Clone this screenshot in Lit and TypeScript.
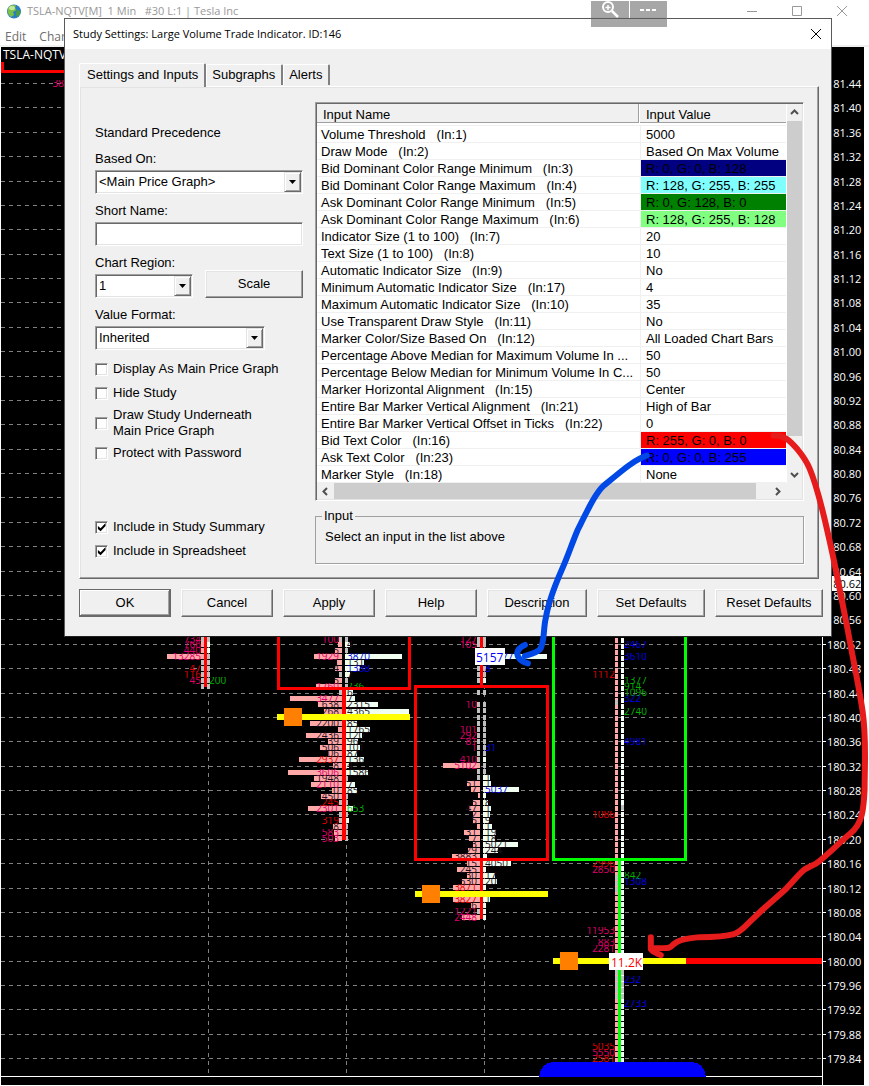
import { LitElement, html, svg, css } from "lit";
import { customElement } from "lit/decorators.js";
import { classMap } from "lit/directives/class-map.js";

/* ---------- footprint chart ---------- */

// One price level: [y, left text, left colour, left bar start, right text, right colour, right bar end]
type Level = [number, string, string, number, string, string, number];

const M = "#e0006c";
const R = "#e60000";
const K = "#20101c";
const B = "#0000e6";
const G = "#00b400";

const COLUMN_ONE: Level[] = [
  [639, "734", M, 0, "", K, 0],
  [644, "766", M, 201, "", K, 210],
  [650, "440", M, 201, "", K, 210],
  [656, "13285", M, 167, "", K, 0],
  [662, "", M, 0, "", K, 0],
  [668, "47", R, 0, "", K, 0],
  [674, "116", R, 0, "", K, 0],
  [680, "45", M, 0, "200", G, 0],
  [686, "", M, 0, "", K, 0],
];

const COLUMN_TWO: Level[] = [
  [639, "100", M, 0, "", K, 0],
  [644, "", M, 338, "4", K, 350],
  [650, "5", K, 335, "", K, 0],
  [656, "1929", M, 314, "3870", B, 402],
  [662, "1", K, 337, "131", K, 364],
  [668, "4", K, 335, "1388", B, 360],
  [674, "", K, 0, "7", K, 350],
  [680, "5", K, 335, "", K, 0],
  [686, "1760", M, 316, "236", G, 0],
  [692, "", K, 0, "6", K, 353],
  [698, "3477", M, 290, "7", K, 355],
  [704, "638", K, 318, "2315", K, 378],
  [711, "268", K, 324, "4365", K, 409],
  [723, "2200", K, 310, "85", K, 357],
  [729, "", K, 338, "1765", K, 370],
  [735, "2436", K, 306, "120", K, 362],
  [741, "39", K, 328, "96", K, 358],
  [747, "506", K, 320, "101", K, 360],
  [753, "06", K, 328, "87", K, 357],
  [759, "2937", R, 299, "136", K, 364],
  [765, "8", K, 333, "4", K, 349],
  [772, "3606", M, 288, "1586", K, 368],
  [778, "1948", K, 314, "", K, 0],
  [784, "2110", M, 311, "7", K, 355],
  [790, "0", K, 332, "85", K, 357],
  [796, "450", K, 321, "", K, 0],
  [802, "245", R, 0, "", K, 0],
  [808, "2301", M, 308, "653", G, 353],
  [814, "", K, 0, "", K, 0],
  [820, "319", R, 0, "", K, 349],
  [826, "8", K, 333, "", K, 0],
  [832, "583", M, 334, "", K, 0],
  [838, "503", M, 335, "", K, 0],
];

const COLUMN_THREE: Level[] = [
  [639, "127", M, 0, "", K, 0],
  [644, "105", M, 0, "", K, 0],
  [650, "", K, 0, "", K, 0],
  [656, "", K, 0, "51577", B, 547],
  [662, "", K, 0, "", K, 0],
  [668, "", K, 0, "8", B, 0],
  [674, "", K, 0, "", K, 0],
  [680, "", K, 0, "", K, 486],
  [692, "", K, 0, "", K, 0],
  [704, "10", M, 0, "", K, 0],
  [710, "", K, 0, "", K, 0],
  [717, "", K, 0, "", K, 0],
  [723, "", K, 0, "", K, 0],
  [729, "101", M, 0, "", K, 0],
  [735, "292", M, 0, "", K, 0],
  [741, "81", M, 0, "", K, 0],
  [747, "1", M, 0, "31", B, 0],
  [753, "", K, 0, "", K, 0],
  [759, "410", M, 0, "", K, 486],
  [765, "5102", M, 443, "", K, 0],
  [771, "", K, 0, "", K, 0],
  [777, "", K, 0, "1", K, 490],
  [783, "51", K, 467, "1", K, 491],
  [789, "7", K, 471, "5037", B, 519],
  [795, "", K, 478, "", K, 486],
  [802, "5", K, 473, "8", K, 488],
  [808, "47", K, 469, "1", K, 491],
  [814, "2", K, 473, "1", K, 490],
  [820, "5", K, 473, "9", K, 489],
  [826, "", K, 477, "1", K, 492],
  [832, "31", K, 464, "19", K, 496],
  [838, "7", K, 469, "18", K, 495],
  [844, "3", K, 473, "5021", K, 518],
  [850, "29", K, 468, "244", K, 498],
  [856, "3883", K, 452, "7", K, 487],
  [863, "15", K, 467, "4050", K, 511],
  [869, "245", K, 457, "1", K, 486],
  [875, "30", K, 467, "17", K, 495],
  [881, "530", K, 462, "20", K, 497],
  [887, "3871", R, 453, "7", K, 486],
  [899, "3827", R, 453, "1", K, 490],
  [905, "6", K, 471, "", K, 486],
  [911, "1221", M, 0, "", K, 486],
  [917, "2448", M, 462, "", K, 486],
];

const COLUMN_FOUR_LEFT: [number, string, string][] = [
  [674, "1112", R], [814, "1086", R], [863, "2996", R], [869, "2850", M],
  [930, "11953", M], [942, "883", M], [948, "2281", M],
  [1046, "5035", R], [1052, "5550", M], [1058, "2581", R],
];

const COLUMN_FOUR_RIGHT: [number, string, string][] = [
  [644, "2467", B], [656, "3610", B], [680, "1377", G], [686, "914", G],
  [692, "1096", G], [698, "322", B], [711, "2740", G], [741, "4981", B],
  [875, "842", G], [881, "1308", B], [979, "232", B], [1003, "2733", B],
];

const PRICES = Array.from({ length: 41 }, (_, i) => ({
  y: Math.round(83 + 24.38 * i),
  label: (181.44 - 0.04 * i).toFixed(2),
}));

const leftText = (x: number, y: number, text: string, fill: string) => svg`
  <svg x=${x - 40} y=${y - 3} width="40" height="7">
    <text class="cell" x="40" y="7" text-anchor="end" fill=${fill}>${text}</text>
  </svg>`;

const rightText = (x: number, y: number, text: string, fill: string) => svg`
  <svg x=${x} y=${y - 3} width="40" height="7">
    <text class="cell" x="0" y="7" fill=${fill}>${text}</text>
  </svg>`;

// center is the left edge of the three pixel wide candle body
const footprint = (levels: Level[], center: number) => levels.map(
  ([y, lt, lc, start, rt, rc, end]) => svg`
    <rect x=${start || center - 3} y=${y - 2} width=${start ? center - start : 3} height="5"
      fill=${start ? "#ffa8a8" : "#c0c0c0"}></rect>
    <rect x=${center + 3} y=${y - 2} width=${end ? end - center - 3 : 3} height="5"
      fill=${end ? "#f0fff0" : "#c0c0c0"}></rect>
    ${lt ? leftText(center - 3, y, lt, lc) : ""}
    ${rt ? rightText(center + 5, y, rt, rc) : ""}`,
);

@customElement("footprint-chart")
export class FootprintChart extends LitElement {
  static styles = css`
    :host { display: block; background: #000; }
    .canvas { display: block; width: 100%; height: auto; shape-rendering: crispEdges; }
    .cell { font: 10px "Open Sans", "Noto Sans", sans-serif; }
    .price { font: 11px "Open Sans", "Noto Sans", sans-serif; fill: #fff; }
    .price.current { fill: #000; }
    .symbol { font: 12px "Open Sans", "Noto Sans", sans-serif; fill: #fff; }
    .tag { font: 12px "Open Sans", "Noto Sans", sans-serif; }
    .grid { stroke: #808080; stroke-width: 1; stroke-dasharray: 4 4; }
    .axis { stroke: #fff; stroke-width: 1; }
    .bar { fill: none; stroke-width: 3; }
    .down { stroke: #f00; }
    .up { stroke: #0f0; }
    .close { stroke: #ff0; stroke-width: 6; }
    .last { stroke: #f00; stroke-width: 6; }
  `;

  render() {
    return html`
      <svg class="canvas" viewBox="1 47 863 1038" role="img" aria-label="Numbers bars chart">
        ${PRICES.map((p) => svg`
          <path class="grid" d="M1 ${p.y + 0.5}H822"></path>
          <path class="axis" d="M822 ${p.y + 0.5}h4"></path>
          <text class="price" x="827" y=${p.y + 5}>${p.label}</text>`)}
        ${[208, 346, 484].map((x) => svg`<path class="grid" d="M${x + 0.5} 637V1076"></path>`)}
        <path class="axis" d="M822.5 60V1085M1 1076.5H822"></path>
        <rect x="826" y="576" width="35" height="15" fill="#fff"></rect>
        <text class="price current" x="827" y="588">180.62</text>

        <text class="symbol" x="3" y="59">TSLA-NQTV[M]</text>
        <path class="bar down" d="M2.5 62V71.5H70"></path>
        ${leftText(64, 83, "38", M)}

        ${footprint(COLUMN_ONE, 204)}
        <rect x="204" y="637" width="3" height="50" fill="#f00"></rect>

        ${footprint(COLUMN_TWO, 342)}
        <rect x="342" y="688" width="4" height="152" fill="#f00"></rect>
        <path class="bar down" d="M278.5 600V688.5H409.5V600"></path>
        <path class="close" d="M277 717H410"></path>
        <rect x="284" y="708" width="18" height="18" fill="#ff8000"></rect>

        ${footprint(COLUMN_THREE, 480)}
        <rect x="480" y="637" width="3" height="48" fill="#f00"></rect>
        <rect x="480" y="860" width="3" height="59" fill="#f00"></rect>
        <path class="bar down" d="M415.5 686.5H547.5V859.5H415.5Z"></path>
        <path class="close" d="M415 894H548"></path>
        <rect x="422" y="885" width="18" height="18" fill="#ff8000"></rect>
        <rect x="475" y="648" width="30" height="17" fill="#fff"></rect>
        <text class="tag" x="476" y="662" fill="#0000ff">5157</text>

        <path d="M616.5 638V1062" stroke="#ffa8a8" stroke-width="3" stroke-dasharray="5 1"></path>
        <path d="M622.5 638V1062" stroke="#f8fff8" stroke-width="3" stroke-dasharray="5 1"></path>
        <path d="M616.5 970V1000M622.5 970V1000M616.5 875V893M616.5 700V706M622.5 805V811" stroke="#c0c0c0"
          stroke-width="3" stroke-dasharray="5 1"></path>
        ${COLUMN_FOUR_LEFT.map(([y, t, c]) => leftText(615, y, t, c))}
        ${COLUMN_FOUR_RIGHT.map(([y, t, c]) => rightText(624, y, t, c))}
        <rect x="618" y="860" width="3" height="202" fill="#0f0"></rect>
        <path class="bar up" d="M553.5 600V859.5H685.5V600"></path>
        <path class="close" d="M553 961H686"></path>
        <path class="last" d="M686 961H822"></path>
        <rect x="560" y="952" width="18" height="18" fill="#ff8000"></rect>
        <rect x="609" y="953" width="34" height="17" fill="#fff"></rect>
        <text class="tag" x="611" y="967" fill="#ff0000">11.2K</text>
        <path d="M539 1077C540 1068 545 1062 554 1062H691C700 1062 705 1068 706 1077Z" fill="#00f"></path>
      </svg>`;
  }
}

/* ---------- study settings dialog ---------- */

const INPUTS: [string, string, string?][] = [
  ["Volume Threshold   (In:1)", "5000"],
  ["Draw Mode   (In:2)", "Based On Max Volume"],
  ["Bid Dominant Color Range Minimum   (In:3)", "R: 0, G: 0, B: 128", "navy"],
  ["Bid Dominant Color Range Maximum   (In:4)", "R: 128, G: 255, B: 255", "cyan"],
  ["Ask Dominant Color Range Minimum   (In:5)", "R: 0, G: 128, B: 0", "green"],
  ["Ask Dominant Color Range Maximum   (In:6)", "R: 128, G: 255, B: 128", "lime"],
  ["Indicator Size (1 to 100)   (In:7)", "20"],
  ["Text Size (1 to 100)   (In:8)", "10"],
  ["Automatic Indicator Size   (In:9)", "No"],
  ["Minimum Automatic Indicator Size   (In:17)", "4"],
  ["Maximum Automatic Indicator Size   (In:10)", "35"],
  ["Use Transparent Draw Style   (In:11)", "No"],
  ["Marker Color/Size Based On   (In:12)", "All Loaded Chart Bars"],
  ["Percentage Above Median for Maximum Volume In ...", "50"],
  ["Percentage Below Median for Minimum Volume In C...", "50"],
  ["Marker Horizontal Alignment   (In:15)", "Center"],
  ["Entire Bar Marker Vertical Alignment   (In:21)", "High of Bar"],
  ["Entire Bar Marker Vertical Offset in Ticks   (In:22)", "0"],
  ["Bid Text Color   (In:16)", "R: 255, G: 0, B: 0", "red"],
  ["Ask Text Color   (In:23)", "R: 0, G: 0, B: 255", "blue"],
  ["Marker Style   (In:18)", "None"],
];

const chevron = (d: string) => html`
  <svg width="9" height="9" viewBox="0 0 9 9" fill="none" stroke="#505050" stroke-width="2"><path d=${d}></path></svg>`;

@customElement("study-settings")
export class StudySettings extends LitElement {
  static styles = css`
    :host {
      display: flex; flex-direction: column; box-sizing: border-box;
      border: 1px solid #5a5a5a; border-bottom-color: #202020; background: #f0f0f0;
      font: 13px/16px "Liberation Sans", Arial, sans-serif; color: #000;
    }
    button, select, input { font: inherit; color: inherit; box-sizing: border-box; margin: 0; border-radius: 0; }
    .caption {
      display: flex; align-items: center; justify-content: space-between; height: 30px;
      padding: 0 8px; background: #fff; font: 11px/16px "Open Sans", "Noto Sans", sans-serif;
    }
    .caption h1 { margin: 0; font: inherit; white-space: nowrap; }
    .close { border: 0; padding: 2px; background: none; display: flex; }
    .tabs { display: flex; align-items: flex-end; padding: 15px 0 0 14px; height: 37px; box-sizing: border-box; }
    .tab {
      height: 21px; padding: 0 6px 0 5px; border: 1px solid #fff; border-bottom: 0;
      border-right: 2px solid #808080; border-radius: 2px 2px 0 0; background: #f0f0f0; margin-bottom: 1px;
    }
    .tab.on { height: 24px; padding: 0 6px 2px 7px; margin-bottom: -1px; z-index: 1; }
    .panel {
      display: grid; grid-template-columns: 208px 1fr; gap: 12px;
      margin: 0 12px 0 14px; padding: 15px 14px 14px 15px;
      border: 1px solid; border-color: #fff #696969 #696969 #fff;
      box-shadow: inset -1px -1px 0 #a0a0a0, inset 1px 1px 0 #e3e3e3;
    }
    .options { display: flex; flex-direction: column; padding-top: 23px; }
    .precedence { margin: 0 0 10px; }
    .field { display: flex; flex-direction: column; gap: 3px; margin-bottom: 9px; }
    .row { display: flex; gap: 12px; align-items: flex-end; margin-bottom: 9px; }
    .row .field { margin: 0; }
    .sunken {
      border: 1px solid; border-color: #a0a0a0 #fff #fff #a0a0a0; background: #fff;
      box-shadow: inset 1px 1px 0 #696969, inset -1px -1px 0 #e3e3e3;
    }
    .text { height: 24px; width: 208px; padding: 2px 4px; }
    .combo { display: grid; height: 24px; box-sizing: border-box; }
    .combo > * { grid-area: 1 / 1; }
    .combo select { appearance: none; border: 0; background: none; padding: 0 22px 0 3px; width: 100%; }
    .drop {
      width: 17px; height: 20px; box-sizing: border-box; justify-self: end; align-self: center; margin-right: 1px;
      background: #f0f0f0; border: 1px solid; border-color: #e3e3e3 #696969 #696969 #e3e3e3;
      box-shadow: inset 1px 1px 0 #fff, inset -1px -1px 0 #a0a0a0;
      display: grid; place-items: center; pointer-events: none;
    }
    .wide { width: 208px; }
    .mid { width: 170px; }
    .small { width: 98px; }
    .push {
      height: 28px; padding: 0 2px; background: #f0f0f0;
      border: 1px solid; border-color: #fff #696969 #696969 #fff;
      box-shadow: inset -1px -1px 0 #a0a0a0, inset 1px 1px 0 #e3e3e3;
    }
    .push.default {
      border-color: #696969;
      box-shadow: inset -1px -1px 0 #696969, inset 1px 1px 0 #fff, inset -2px -2px 0 #a0a0a0;
    }
    .scale { width: 98px; }
    .checks { display: flex; flex-direction: column; gap: 8px; padding-top: 2px; }
    .check { display: flex; align-items: center; gap: 5px; }
    .check.two { margin: -2px 0; }
    .check input { appearance: none; width: 13px; height: 13px; flex: none; }
    .check input:checked::before {
      content: ""; display: block; width: 9px; height: 9px; margin: 1px; background: #000;
      clip-path: polygon(10% 40%, 40% 65%, 95% 5%, 95% 40%, 40% 98%, 10% 72%);
    }
    .bottom { margin-top: auto; padding-bottom: 5px; }
    .main { display: flex; flex-direction: column; min-width: 0; gap: 7px; }
    .list { display: grid; grid-template-columns: 1fr 16px; padding: 1px; }
    table { border-collapse: separate; border-spacing: 0; table-layout: fixed; width: 100%; }
    th { padding: 0; font-weight: normal; text-align: left; height: 21px; vertical-align: top; border-bottom: 1px solid #f0f0f0; }
    .head { display: block; height: 18px; line-height: 21px; padding-left: 6px; background: #f0f0f0; border-bottom: 1px solid #a0a0a0; }
    .name .head { border-right: 1px solid #a0a0a0; margin-right: 2px; }
    .val .head { padding-left: 6px; margin-left: -1px; }
    .val { width: 145px; }
    td { height: 14px; line-height: 14px; padding: 2px 0 0 4px; white-space: pre; overflow: hidden; border-bottom: 1px solid #f0f0f0; }
    td:first-child { border-right: 1px solid #f0f0f0; }
    td:last-child { padding-left: 5px; }
    .navy { background: #000080; }
    .cyan { background: #80ffff; }
    .green { background: #008000; }
    .lime { background: #80ff80; }
    .red { background: #ff0000; }
    .blue { background: #0000ff; }
    .vbar { display: flex; flex-direction: column; background: #f0f0f0; border-left: 1px solid #fff; }
    .hbar { display: flex; background: #f0f0f0; height: 16px; }
    .corner { background: #f0f0f0; }
    .arrow { border: 0; background: none; padding: 0; display: grid; place-items: center; flex: none; width: 100%; height: 17px; }
    .hbar .arrow { width: 17px; height: 16px; }
    .vthumb { flex: 1; background: #cdcdcd; margin-bottom: 30px; }
    .hthumb { flex: 1; background: #cdcdcd; margin-right: 13px; }
    fieldset {
      margin: 0; padding: 5px 8px 18px 9px; border: 1px solid #a0a0a0; min-width: 0;
      box-shadow: 1px 1px 0 #fff;
    }
    legend { padding: 0 2px; margin-left: -3px; }
    fieldset p { margin: 0; }
    .actions { display: flex; gap: 10px; padding: 10px 8px 19px 14px; }
    .w92 { flex: 0 1 92px; }
    .w100 { flex: 0 1 100px; }
    .w108 { flex: 0 1 108px; }
  `;

  private combo(id: string, value: string, size: string) {
    return html`
      <div class="combo sunken ${size}">
        <select id=${id}><option>${value}</option></select>
        <span class="drop"><svg width="7" height="4" viewBox="0 0 7 4"><path d="M0 0H7L3.5 4Z"></path></svg></span>
      </div>`;
  }

  private check(id: string, label: unknown, checked = false, two = false) {
    return html`
      <div class=${classMap({ check: true, two })}>
        <input class="sunken" type="checkbox" id=${id} ?checked=${checked} />
        <label for=${id}>${label}</label>
      </div>`;
  }

  render() {
    return html`
      <div class="caption">
        <h1>Study Settings: Large Volume Trade Indicator. ID:146</h1>
        <button class="close" aria-label="Close">
          <svg width="10" height="10" viewBox="0 0 10 10" stroke="#000"><path d="M0 0L10 10M10 0L0 10"></path></svg>
        </button>
      </div>
      <div class="tabs" role="tablist">
        <button class="tab on" role="tab" aria-selected="true">Settings and Inputs</button>
        <button class="tab" role="tab">Subgraphs</button>
        <button class="tab" role="tab">Alerts</button>
      </div>
      <div class="panel">
        <div class="options">
          <p class="precedence">Standard Precedence</p>
          <div class="field"><label for="based">Based On:</label>${this.combo("based", "<Main Price Graph>", "wide")}</div>
          <div class="field"><label for="short">Short Name:</label><input id="short" class="text sunken" type="text" /></div>
          <div class="row">
            <div class="field"><label for="region">Chart Region:</label>${this.combo("region", "1", "small")}</div>
            <button class="push scale">Scale</button>
          </div>
          <div class="field"><label for="format">Value Format:</label>${this.combo("format", "Inherited", "mid")}</div>
          <div class="checks">
            ${this.check("main", "Display As Main Price Graph")}
            ${this.check("hide", "Hide Study")}
            ${this.check("under", html`Draw Study Underneath<br />Main Price Graph`, false, true)}
            ${this.check("protect", "Protect with Password")}
          </div>
          <div class="checks bottom">
            ${this.check("summary", "Include in Study Summary", true)}
            ${this.check("sheet", "Include in Spreadsheet", true)}
          </div>
        </div>
        <div class="main">
          <div class="list sunken">
            <table>
              <thead>
                <tr>
                  <th class="name"><span class="head">Input Name</span></th>
                  <th class="val"><span class="head">Input Value</span></th>
                </tr>
              </thead>
              <tbody>
                ${INPUTS.map(([name, value, color]) => html`<tr><td>${name}</td><td class=${color ?? ""}>${value}</td></tr>`)}
              </tbody>
            </table>
            <div class="vbar">
              <button class="arrow" aria-label="Scroll up">${chevron("M1 6L4.5 2.5L8 6")}</button>
              <div class="vthumb"></div>
              <button class="arrow" aria-label="Scroll down">${chevron("M1 3L4.5 6.5L8 3")}</button>
            </div>
            <div class="hbar">
              <button class="arrow" aria-label="Scroll left">${chevron("M6 1L2.5 4.5L6 8")}</button>
              <div class="hthumb"></div>
              <button class="arrow" aria-label="Scroll right">${chevron("M3 1L6.5 4.5L3 8")}</button>
            </div>
            <div class="corner"></div>
          </div>
          <fieldset>
            <legend>Input</legend>
            <p>Select an input in the list above</p>
          </fieldset>
        </div>
      </div>
      <div class="actions">
        <button class="push default w92">OK</button>
        <button class="push w92">Cancel</button>
        <button class="push w92">Apply</button>
        <button class="push w92">Help</button>
        <button class="push w100">Description</button>
        <button class="push w108">Set Defaults</button>
        <button class="push w108">Reset Defaults</button>
      </div>`;
  }
}

/* ---------- application window ---------- */

@customElement("app-root")
export class AppRoot extends LitElement {
  static styles = css`
    :host {
      display: block; position: relative; background: #fff;
      font: 11px/16px "Open Sans", "Noto Sans", sans-serif;
    }
    .titlebar { display: flex; align-items: center; gap: 6px; height: 22px; padding-left: 7px; color: #999; }
    .title { flex: 1; white-space: pre; }
    .controls { display: flex; padding-right: 5px; }
    .controls button { width: 45px; height: 22px; padding: 0; border: 0; background: none; display: grid; place-items: center; }
    .menu {
      display: flex; gap: 13px; height: 23px; padding: 0 5px; align-items: center;
      border-bottom: 2px solid #f0f0f0; font-size: 12px;
    }
    .menu a { color: #6d6d6d; text-decoration: none; line-height: 24px; padding-top: 6px; }
    .chart { margin: 0 5px 1px 1px; }
    .dialog { position: absolute; top: 18px; left: 64px; right: 37px; }
    .capture {
      position: absolute; top: 1px; left: 591px; width: 76px; height: 26px; background: #a7a7a7;
      display: flex;
    }
    .capture button { flex: 1; border: 0; padding: 0; background: none; height: 17px; display: grid; place-items: center; }
    .capture button + button { border-left: 1px solid #fff; }
    .marks { position: absolute; inset: 0; width: 100%; height: 100%; pointer-events: none; }
    .pen { fill: none; stroke-width: 6; stroke-linecap: round; stroke-linejoin: round; }
  `;

  render() {
    return html`
      <header class="titlebar">
        <svg width="14" height="15" viewBox="0 0 14 15">
          <circle cx="7" cy="7.5" r="7" fill="#2a7fc4"></circle>
          <path d="M1 4C3 0.5 7 0.5 9 1.5L8 4L9.500 6L6 8L7 11L4 13C1 11 0 8 1 4Z" fill="#7cc242"></path>
          <path d="M10 6L13.500 7C13.500 10 12 12 10 13L9 10Z" fill="#4c9f38"></path>
          <ellipse cx="5" cy="4" rx="3" ry="2" fill="#e6f5c8" opacity="0.7"></ellipse>
        </svg>
        <span class="title">TSLA-NQTV[M]  1 Min   #30 L:1 | Tesla Inc</span>
        <div class="controls">
          <button aria-label="Minimize"><svg width="10" height="10" viewBox="0 0 10 10" stroke="#999"><path d="M0 5.500H10"></path></svg></button>
          <button aria-label="Maximize"><svg width="10" height="10" viewBox="0 0 10 10" fill="none" stroke="#999"><path d="M.5.500H9.500V9.500H.5Z"></path></svg></button>
          <button aria-label="Close"><svg width="10" height="10" viewBox="0 0 10 10" stroke="#999"><path d="M0 0L10 10M10 0L0 10"></path></svg></button>
        </div>
      </header>
      <nav class="menu"><a href="#edit">Edit</a><a href="#chart">Chart</a></nav>
      <footprint-chart class="chart"></footprint-chart>
      <study-settings class="dialog" role="dialog" aria-label="Study Settings"></study-settings>
      <div class="capture">
        <button aria-label="Zoom in">
          <svg width="18" height="17" viewBox="0 0 18 17" fill="none" stroke="#fff">
            <circle cx="7" cy="6" r="5" stroke-width="2"></circle>
            <path d="M11 10L17 16" stroke-width="2.500"></path>
            <path d="M4.500 6.500H9.500M7 4V9" stroke-width="1.500"></path>
          </svg>
        </button>
        <button aria-label="More">
          <svg width="16" height="2" viewBox="0 0 16 2" fill="#fff"><path d="M0 0h4v2H0zM6 0h4v2H6zM12 0h4v2h-4z"></path></svg>
        </button>
      </div>
      <svg class="marks" viewBox="0 0 869 1086" aria-hidden="true">
        <path d="M591 18.500H667" stroke="#5a5a5a"></path>
        <path class="pen" stroke="#0049e6" d="M647 456C636 459 622 471 604 486C596 493 588 510 578 530C572 544 568 557 562 570C555 586 548 606 546 618C543 630 545 644 540 650C536 654 530 655 525 656.500"></path>
        <path class="pen" stroke="#0049e6" d="M525 645.500C519 648 516 652 518 657C520 661 524 663 528 664"></path>
        <path class="pen" stroke="#e61b1b" d="M774 436C784 435 790 441 798 450C803 456 807 462 810 469C818 488 823 510 829 537C836 567 842 600 848 630C853 658 859 685 863 712C867 740 865 765 865 790C864 810 863 824 851 834C840 843 829 855 817 864C812 867 808 868 804 871C798 876 793 883 787 889C775 900 765 908 756 917C748 924 742 933 734 935C724 938 712 938 700 938C690 939 680 940 674 945C670 949 669 949 664 949H653"></path>
        <path class="pen" stroke="#e61b1b" d="M651 938V950C653 953 657 954 661 956"></path>
      </svg>`;
  }
}
